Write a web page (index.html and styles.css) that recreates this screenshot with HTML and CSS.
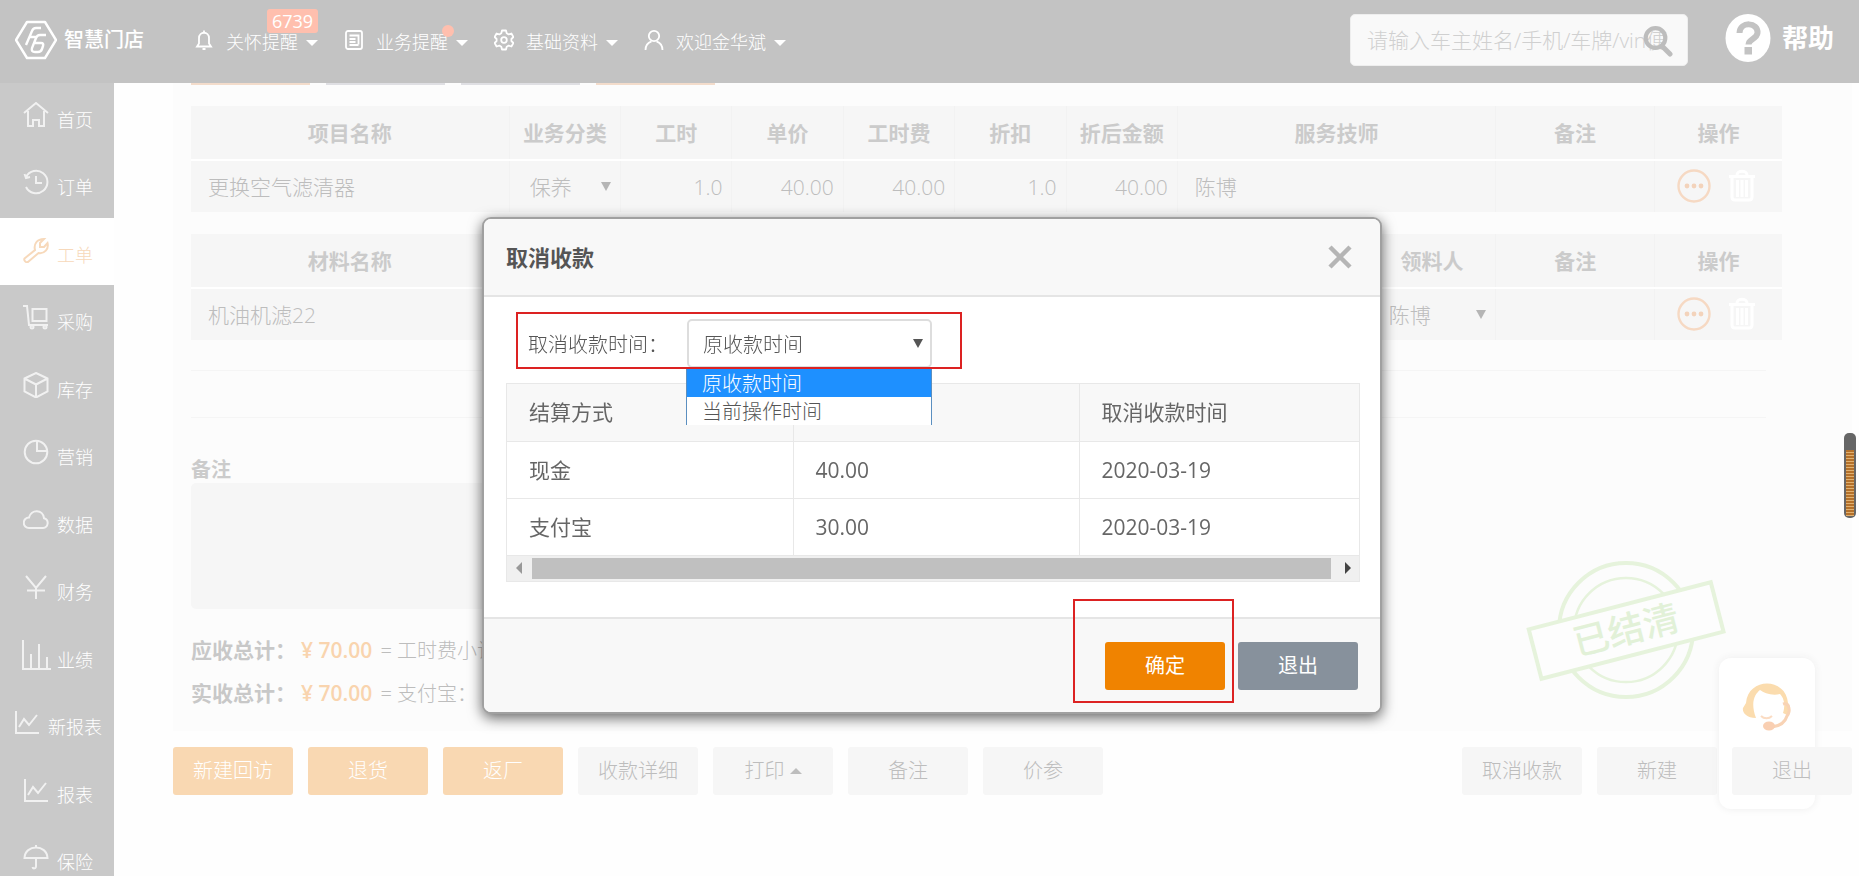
FILE: index.html
```
<!DOCTYPE html>
<html lang="zh-CN">
<head>
<meta charset="utf-8">
<title>智慧门店 - 工单</title>
<link rel="stylesheet" href="styles.css">
</head>
<body>
<svg class="defs" width="0" height="0" aria-hidden="true">
  <symbol id="more" viewBox="0 0 34 34"><circle cx="17" cy="17" r="15.5" fill="none" stroke="#f6d9c3" stroke-width="2.4"/><g fill="#f3d3bb"><circle cx="10" cy="17" r="2.4"/><circle cx="17" cy="17" r="2.4"/><circle cx="24" cy="17" r="2.4"/></g></symbol>
  <symbol id="trash" viewBox="0 0 28 34"><path d="M1 7.500h26M9 6c0-5 10-5 10 0M4 9v19q0 3 3 3h14q3 0 3-3V9M9.500 11v17M14 11v17M18.500 11v17" fill="none" stroke="#fff" stroke-width="3"/></symbol>
  <symbol id="trend" viewBox="0 0 26 26"><path d="M2 2v22h23M5 18l5-8 5 6 8-10" fill="none" stroke="currentColor" stroke-width="2"/></symbol>
</svg>

<header class="topbar">
  <a class="brand" href="#">
    <svg width="42" height="40" viewBox="0 0 42 40" fill="none" stroke="#fff"><path d="M12 2h18l11 18-11 18H12L1 20z" stroke-width="2.400" stroke-linejoin="round"/><path d="M11 25l6-14q1-3 4-3h5M14 17h8M31 15h-6q-3 0-4 3l-4 10q-1 4 3 4h3q3 0 4-3l1-3q1-3-2-3h-6" stroke-width="2.400"/></svg>
    <span>智慧门店</span>
  </a>
  <nav class="topnav">
    <a class="n1" href="#"><svg width="20" height="22" viewBox="0 0 20 22" fill="none" stroke="#fff" stroke-width="1.800"><path d="M3 17.500h14l-2-3V9c0-7-10-7-10 0v5.500zM10 3.500V1.500M8.500 20h3"/></svg><span>关怀提醒</span><i class="caret"></i><b class="count">6739</b></a>
    <a class="n2" href="#"><svg width="20" height="22" viewBox="0 0 20 22" fill="none" stroke="#fff" stroke-width="1.800"><rect x="2" y="2" width="16" height="18" rx="2"/><path d="M5.500 6.500h9v9M5.500 10h6M5.500 13h6M5.500 16h9"/></svg><span>业务提醒</span><i class="caret"></i><b class="dot"></b></a>
    <a class="n3" href="#"><svg width="20" height="22" viewBox="0 0 20 22" fill="none" stroke="#fff" stroke-width="1.800" stroke-linejoin="round"><path d="M8 1.500h4l.700 2.700 2 1.200 2.700-.900 2 3.500-2 2v2l2 2-2 3.500-2.700-.900-2 1.200-.700 2.700H8l-.700-2.700-2-1.200-2.700.900-2-3.500 2-2v-2l-2-2 2-3.500 2.700.900 2-1.200z"/><circle cx="10" cy="11" r="2.800"/></svg><span>基础资料</span><i class="caret"></i></a>
    <a class="n4" href="#"><svg width="20" height="22" viewBox="0 0 20 22" fill="none" stroke="#fff" stroke-width="1.800"><circle cx="10" cy="7" r="5.200"/><path d="M1.500 21c0-5 2.500-7.500 6-8.700M18.500 21c0-5-2.500-7.500-6-8.700"/></svg><span>欢迎金华斌</span><i class="caret"></i></a>
  </nav>
  <form class="search">
    <input type="text" aria-label="搜索" placeholder="请输入车主姓名/手机/车牌/vin便">
    <button type="button" aria-label="查询"><svg width="30" height="32" viewBox="0 0 30 32" fill="none" stroke="#bdbdbd"><circle cx="12.500" cy="13" r="9.800" stroke-width="4.200"/><path d="M19 21l8 8" stroke-width="5" stroke-linecap="round"/></svg></button>
  </form>
  <a class="help" href="#"><svg width="46" height="48" viewBox="0 0 46 48"><ellipse cx="23" cy="24" rx="22.500" ry="24" fill="#fff"/><path d="M14.500 19c.500-12 19-11 18 0-.600 6-9 6-9 11.500" fill="none" stroke="#c3c3c3" stroke-width="6"/><rect x="19.500" y="33" width="7.500" height="7.500" fill="#c3c3c3"/></svg><span>帮助</span></a>
</header>

<div class="shell">
  <nav class="side">
    <a href="#"><svg viewBox="0 0 26 26"><path d="M1 11L13 1l12 10M5 9v15h5v-6h6v6h5V9"/></svg><span>首页</span></a>
    <a href="#"><svg viewBox="0 0 26 26"><path d="M3 8a11.300 11.300 0 1 1 0 10M1.500 5l1.500 4 4-1M13 7v7h6"/></svg><span>订单</span></a>
    <a class="on" href="#"><svg viewBox="0 0 26 26"><path d="M1.500 21.500L12 13c-1.500-6 2-11 9-11l-4 4v4h4l3.500-4c1.500 6-3 11-9 10L5 25c-2 1-4.500-1.500-3.500-3.500z"/></svg><span>工单</span></a>
    <a href="#"><svg viewBox="0 0 26 26"><path d="M0 2h4l2 19h19M9.500 5h14v12h-14z"/><circle cx="9" cy="23" r="1.500"/><circle cx="22" cy="23" r="1.500"/></svg><span>采购</span></a>
    <a href="#"><svg viewBox="0 0 26 26"><path d="M13 1l11.500 5.500v13L13 25.500 1.500 19.500v-13zM1.500 6.500L13 12.500l11.500-6M13 12.500v13"/></svg><span>库存</span></a>
    <a href="#"><svg viewBox="0 0 26 26"><circle cx="13" cy="13" r="11.300"/><path d="M14 2v10h10"/></svg><span>营销</span></a>
    <a href="#"><svg viewBox="0 0 26 26"><path d="M6 21h14a5 5 0 0 0 1-9.800C20 2 8 2 6 10.500A5.200 5.200 0 0 0 6 21z"/></svg><span>数据</span></a>
    <a href="#"><svg viewBox="0 0 26 26"><path d="M3 2l10 12L23 2M13 14v11M4 16.500h18"/></svg><span>财务</span></a>
    <a href="#"><svg class="wide" viewBox="0 0 30 30"><path d="M2 0v29h28M10 28V14M18 28V4M26 28V17"/></svg><span>业绩</span></a>
    <a href="#"><svg viewBox="0 0 26 26"><use href="#trend"/></svg><span>新报表</span></a>
    <a href="#"><svg viewBox="0 0 26 26"><use href="#trend"/></svg><span>报表</span></a>
    <a href="#"><svg viewBox="0 0 26 26"><path d="M1.500 14C2 0 24 0 24.500 14zM13 14v8c0 3-3 3-3.500 1M13 3.500V1"/></svg><span>保险</span></a>
  </nav>

  <main class="page">
    <section class="panel">
      <div class="tabs"><i class="tab warm"></i><i class="tab"></i><i class="tab"></i><i class="tab warm"></i></div>
      <table class="grid">
        <colgroup><col class="w20"><col class="w7"><col class="w7"><col class="w7"><col class="w7"><col class="w7"><col class="w7"><col class="w20"><col class="w10"><col class="w8"></colgroup>
        <thead><tr><th>项目名称</th><th>业务分类</th><th>工时</th><th>单价</th><th>工时费</th><th>折扣</th><th>折后金额</th><th>服务技师</th><th>备注</th><th>操作</th></tr></thead>
        <tbody><tr><td>更换空气滤清器</td><td class="pick"><div class="cellselect"><select aria-label="业务分类"><option>保养</option></select></div></td><td class="num">1.0</td><td class="num">40.00</td><td class="num">40.00</td><td class="num">1.0</td><td class="num">40.00</td><td>陈博</td><td></td><td class="ops"><div><button type="button" aria-label="更多"><svg width="34" height="34"><use href="#more"/></svg></button><button type="button" aria-label="删除"><svg width="28" height="34"><use href="#trash"/></svg></button></div></td></tr></tbody>
      </table>
      <table class="grid">
        <colgroup><col class="w20"><col class="w54"><col class="w8"><col class="w10"><col class="w8"></colgroup>
        <thead><tr><th>材料名称</th><th></th><th>领料人</th><th>备注</th><th>操作</th></tr></thead>
        <tbody><tr><td>机油机滤22</td><td></td><td class="pick"><div class="cellselect"><select aria-label="领料人"><option>陈博</option></select></div></td><td></td><td class="ops"><div><button type="button" aria-label="更多"><svg width="34" height="34"><use href="#more"/></svg></button><button type="button" aria-label="删除"><svg width="28" height="34"><use href="#trash"/></svg></button></div></td></tr></tbody>
      </table>
      <div class="blank"></div>
      <label class="memo-label" for="memo">备注</label>
      <textarea id="memo" class="memo"></textarea>
      <dl class="totals">
        <dt>应收总计：</dt><dd><strong>¥ 70.00</strong> = 工时费小计</dd>
        <dt>实收总计：</dt><dd><strong>¥ 70.00</strong> = 支付宝：</dd>
      </dl>
      <svg class="stamp" width="204" height="148" viewBox="0 0 204 148" fill="none" stroke="#e6f3dc">
        <circle cx="102" cy="74" r="67" stroke-width="4"/><circle cx="102" cy="74" r="52" stroke-width="2.500"/>
        <g transform="rotate(-14.500 102 74)"><rect x="8" y="49" width="188" height="51" fill="#fdfdfd" stroke-width="4"/><text x="102" y="87" text-anchor="middle" fill="#e2f1d8" stroke="none">已结清</text></g>
      </svg>
    </section>
    <div class="actions">
      <button type="button" class="btn warm">新建回访</button><button type="button" class="btn warm">退货</button><button type="button" class="btn warm">返厂</button><button type="button" class="btn">收款详细</button><button type="button" class="btn">打印<i class="up"></i></button><button type="button" class="btn">备注</button><button type="button" class="btn">价参</button>
      <span class="fill"></span>
      <button type="button" class="btn">取消收款</button><button type="button" class="btn">新建</button><button type="button" class="btn top">退出</button>
    </div>
  </main>
</div>

<aside class="service" aria-label="在线客服">
  <svg width="50" height="50" viewBox="0 0 50 50"><path d="M4 21C6-5 44-5 46 21c3 2 3 9-1 12l-4-2c3-10 0-16-3-19-8 2-16-1-20-4-5 4-10 12-4 28C4 36 0 30 1 26z" fill="#fbdcae"/><path d="M41 22c6-2 8 7 4 12-2 7-7 10-15 11" fill="none" stroke="#f8d3b5" stroke-width="3"/><path d="M19 34c3 3 8 3 11 0" fill="none" stroke="#fbdcc3" stroke-width="2"/><ellipse cx="27" cy="44" rx="6" ry="4.500" fill="#f9cfb2"/></svg>
</aside>
<div class="meter"><i></i></div>

<div class="overlay">
  <div class="modal" role="dialog" aria-labelledby="dlg-title">
    <div class="modal-head"><h2 id="dlg-title">取消收款</h2><button type="button" class="close" aria-label="关闭"><svg width="24" height="24" viewBox="0 0 24 24"><path d="M2 2l20 20M22 2L2 22" stroke="#b5b5b5" stroke-width="4.500"/></svg></button></div>
    <div class="modal-body">
      <div class="field">
        <label for="when">取消收款时间：</label>
        <div class="select">
          <select id="when"><option>原收款时间</option><option>当前操作时间</option></select>
          <ul class="options"><li class="sel">原收款时间</li><li>当前操作时间</li></ul>
        </div>
      </div>
      <div class="tablebox">
        <table class="pay">
          <colgroup><col class="w34"><col class="w34"><col></colgroup>
          <thead><tr><th>结算方式</th><th></th><th>取消收款时间</th></tr></thead>
          <tbody><tr><td>现金</td><td>40.00</td><td>2020-03-19</td></tr><tr><td>支付宝</td><td>30.00</td><td>2020-03-19</td></tr></tbody>
        </table>
        <div class="hbar"><i class="left"></i><span></span><i class="right"></i></div>
      </div>
      <div class="mark mark-field"></div>
    </div>
    <div class="modal-foot">
      <button type="button" class="btn ok">确定</button><button type="button" class="btn exit">退出</button>
      <div class="mark mark-ok"></div>
    </div>
  </div>
</div>
</body>
</html>
```
FILE: styles.css
```
* { box-sizing: border-box; }
body {
  margin: 0;
  height: 100vh;
  overflow: hidden;
  background: #fefefe;
  font: 300 20px/28px "Open Sans", "Noto Sans CJK SC", sans-serif;
  color: #bdbdbd;
}
a { color: inherit; text-decoration: none; }
button, input, select, textarea { font: inherit; color: inherit; }
button { border: 0; padding: 0; background: none; }
svg { display: block; flex: none; }
.defs { position: absolute; }

/* top bar */
.topbar {
  display: flex;
  align-items: center;
  height: 83px;
  padding: 0 25px 4px 15px;
  background: #c3c3c3;
  color: #fff;
}
.brand { display: flex; align-items: center; gap: 7px; width: 179px; font-weight: 500; }
.topnav { display: flex; flex: 1; font-size: 18px; font-weight: 300; }
.topnav a { position: relative; display: flex; align-items: center; gap: 8px; }
.topnav svg { margin-right: 4px; }
.topnav span { padding-top: 4px; }
.n1, .n2, .n3 { margin-right: 26px; }
.caret {
  margin-top: 6px;
  border: 6px solid transparent;
  border-top-color: #fff;
  border-bottom: 0;
}
.count {
  position: absolute;
  right: 0;
  top: -15px;
  width: 51px;
  height: 24px;
  border-radius: 3px;
  background: #ffbfae;
  font-weight: 400;
  line-height: 24px;
  text-align: center;
}
.dot {
  position: absolute;
  right: 14px;
  top: 1px;
  width: 12px;
  height: 12px;
  border-radius: 50%;
  background: #ffbfae;
}
.search { position: relative; width: 338px; margin-right: 37px; }
.search input {
  display: block;
  width: 100%;
  height: 52px;
  padding: 0 17px 0 16px;
  border: 1px solid #eee;
  border-radius: 5px;
  background: #f9f9f9;
  font-size: 21px;
}
.search input::placeholder { color: #d0d0d0; opacity: 1; }
.search button { position: absolute; right: 15px; top: 11px; }
.help { display: flex; align-items: center; gap: 11px; padding-bottom: 3px; font-size: 26px; font-weight: 700; }

/* side menu */
.shell { display: flex; }
.side { flex: none; width: 114px; height: calc(100vh - 83px); overflow: hidden; background: #c9c9c9; color: #fff; font-size: 18px; }
.side a { display: flex; align-items: center; justify-content: center; gap: 8px; height: 67px; padding: 0 0 4px 2px; }
.side a:nth-child(even) { height: 68px; }
.side svg { width: 26px; height: 26px; fill: none; stroke: currentColor; stroke-width: 2; opacity: 0.75; }
.side svg.wide { width: 30px; height: 30px; margin: 0 -2px; }
.side span { padding-top: 10px; }
.side .on { background: #fff; color: #f7d9bb; }
.side .on svg { opacity: 1; }

/* work order */
.page { flex: 1; min-width: 0; padding: 0 7px 0 59px; }
.panel { position: relative; padding: 0 70px 23px 18px; background: #fcfcfc; }
.tabs { display: flex; gap: 16px; margin-bottom: 21px; }
.tab { width: 119px; height: 2px; background: #dfdfe3; }
.tab.warm { background: #f3dccb; }
.grid {
  width: 100%;
  margin-bottom: 22px;
  border-collapse: collapse;
  table-layout: fixed;
  background: #f6f6f6;
  font-size: 21px;
}
.w20 { width: 20%; } .w7 { width: 7%; } .w10 { width: 10%; } .w8 { width: 8%; } .w54 { width: 54%; }
.grid th { height: 54px; padding: 0; border-bottom: 2px solid #fff; font-weight: 700; color: #cbcbcb; }
.grid td { height: 52px; padding: 0 9px 0 17px; }
.grid th + th, .grid td + td { border-left: 1px solid #f2f2f2; }
.grid .num { text-align: right; }
.grid .pick { padding-left: 20px; }
.cellselect { position: relative; }
.cellselect select { width: 100%; padding: 0; border: 0; background: none; appearance: none; display: block; }
.cellselect::after, .select::after {
  content: "";
  position: absolute;
  right: 0;
  top: 9px;
  border: 5px solid transparent;
  border-top: 9px solid #b5b5b5;
  border-bottom: 0;
}
.ops div { display: flex; justify-content: center; gap: 17px; padding: 0 12px 2px 0; }
.blank { height: 48px; margin: 30px 16px 37px 0; border: 1px solid #f5f5f5; border-width: 1px 0; }
.memo-label { display: block; padding-top: 2px; line-height: 26px; font-weight: 700; color: #cbcbcb; }
.memo {
  display: block;
  width: 64%;
  height: 126px;
  border: 0;
  border-radius: 5px;
  background: #f6f6f6;
  resize: none;
}
.totals { display: grid; grid-template-columns: 108px 1fr; row-gap: 14px; margin: 27px 0 0; }
.totals dt { font-size: 21px; font-weight: 700; white-space: nowrap; color: #c8c8c8; }
.totals dd { margin: 0 0 0 2px; }
.totals strong { margin-right: 3px; font-weight: 600; font-size: 21px; color: #f9d4ae; }
.stamp { position: absolute; right: 124px; bottom: 27px; font-size: 36px; font-weight: 500; }

.actions { display: flex; gap: 15px; padding-top: 16px; }
.fill { flex: 1; margin-right: -15px; }
.btn { display: flex; align-items: center; justify-content: center; gap: 5px; width: 120px; height: 48px; border-radius: 3px; background: #f6f6f6; }
.btn.warm { background: #f9d8b2; color: #fff; }
.btn.top { position: relative; z-index: 2; }
.up { border: 6px solid transparent; border-bottom-color: #bdbdbd; border-top: 0; }

.service {
  position: fixed;
  z-index: 1;
  right: 44px;
  top: 658px;
  display: flex;
  justify-content: center;
  width: 96px;
  height: 151px;
  padding-top: 24px;
  border-radius: 12px;
  background: #fff;
  box-shadow: 0 0 8px #eee;
}
.meter { position: fixed; right: 3px; top: 433px; width: 12px; height: 85px; padding: 17px 2px 2px; border-radius: 5px; background: #666; }
.meter i { display: block; height: 100%; background: repeating-linear-gradient(#b5712a 0 2px, #e0b070 2px 3px); }

/* dialog */
.overlay { position: fixed; z-index: 3; inset: 0; padding: 217px 0 0 5px; }
.modal {
  width: 900px;
  margin: 0 auto;
  border: 2px solid #a0a0a0;
  border-radius: 9px;
  background: #fff;
  box-shadow: 0 4px 14px rgba(0, 0, 0, 0.6);
  color: #555;
}
.modal-head { display: flex; align-items: center; justify-content: space-between; height: 78px; padding: 0 28px 0 22px; border-bottom: 2px solid #e5e5e5; border-radius: 7px 7px 0 0; background: #f8f8f8; }
.modal-head h2 { margin: 0; font-size: 22px; font-weight: 700; }
.modal-body { position: relative; padding: 22px 20px 35px 22px; }
.field { display: flex; align-items: center; padding-left: 22px; margin-bottom: 15px; }
.field label { width: 159px; padding-top: 3px; white-space: nowrap; }
.select { position: relative; width: 245px; }
.select > select { display: block; width: 100%; height: 49px; padding: 3px 14px 0; border: 2px solid #ddd; border-radius: 5px; background: #fff; appearance: none; }
.select::after { right: 9px; top: 20px; border-top-color: #555; }
.options { position: absolute; z-index: 1; left: -1px; top: 50px; width: 246px; margin: 0; padding: 0; list-style: none; border: 1px solid #5b8fc0; border-width: 0 1px; background: #fff; }
.options li { height: 28px; padding-left: 15px; line-height: 29px; }
.options .sel { background: #1e90ff; color: #fff; }
.tablebox { border: 1px solid #e8e8e8; }
.pay { width: 100%; border-collapse: collapse; table-layout: fixed; font-size: 21px; }
.w34 { width: 286px; }
.pay th, .pay td { height: 57px; padding: 0 22px; border-bottom: 1px solid #e8e8e8; color: #666; font-weight: 400; text-align: left; }
.pay th { background: #f8f8f8; }
.pay th + th, .pay td + td { border-left: 1px solid #e8e8e8; }
.hbar { display: flex; align-items: center; height: 25px; padding: 0 8px 0 9px; background: #f0f0f0; }
.hbar span { flex: 1; height: 21px; margin: 0 14px 0 10px; background: #c0c0c0; }
.left { border: 6px solid transparent; border-right-color: #999; border-left: 0; }
.right { border: 6px solid transparent; border-left-color: #444; border-right: 0; }
.modal-foot { position: relative; display: flex; justify-content: flex-end; gap: 13px; padding: 23px 22px 22px; border-top: 2px solid #e5e5e5; border-radius: 0 0 7px 7px; background: #f8f8f8; }
.ok, .exit { color: #fff; font-weight: 400; }
.ok { background: #f08300; }
.exit { background: #87919c; }
.mark { position: absolute; z-index: 2; border: 2px solid #dc2222; pointer-events: none; }
.mark-field { left: 32px; top: 15px; width: 446px; height: 57px; }
.mark-ok { right: 146px; top: -20px; width: 161px; height: 104px; }
```
